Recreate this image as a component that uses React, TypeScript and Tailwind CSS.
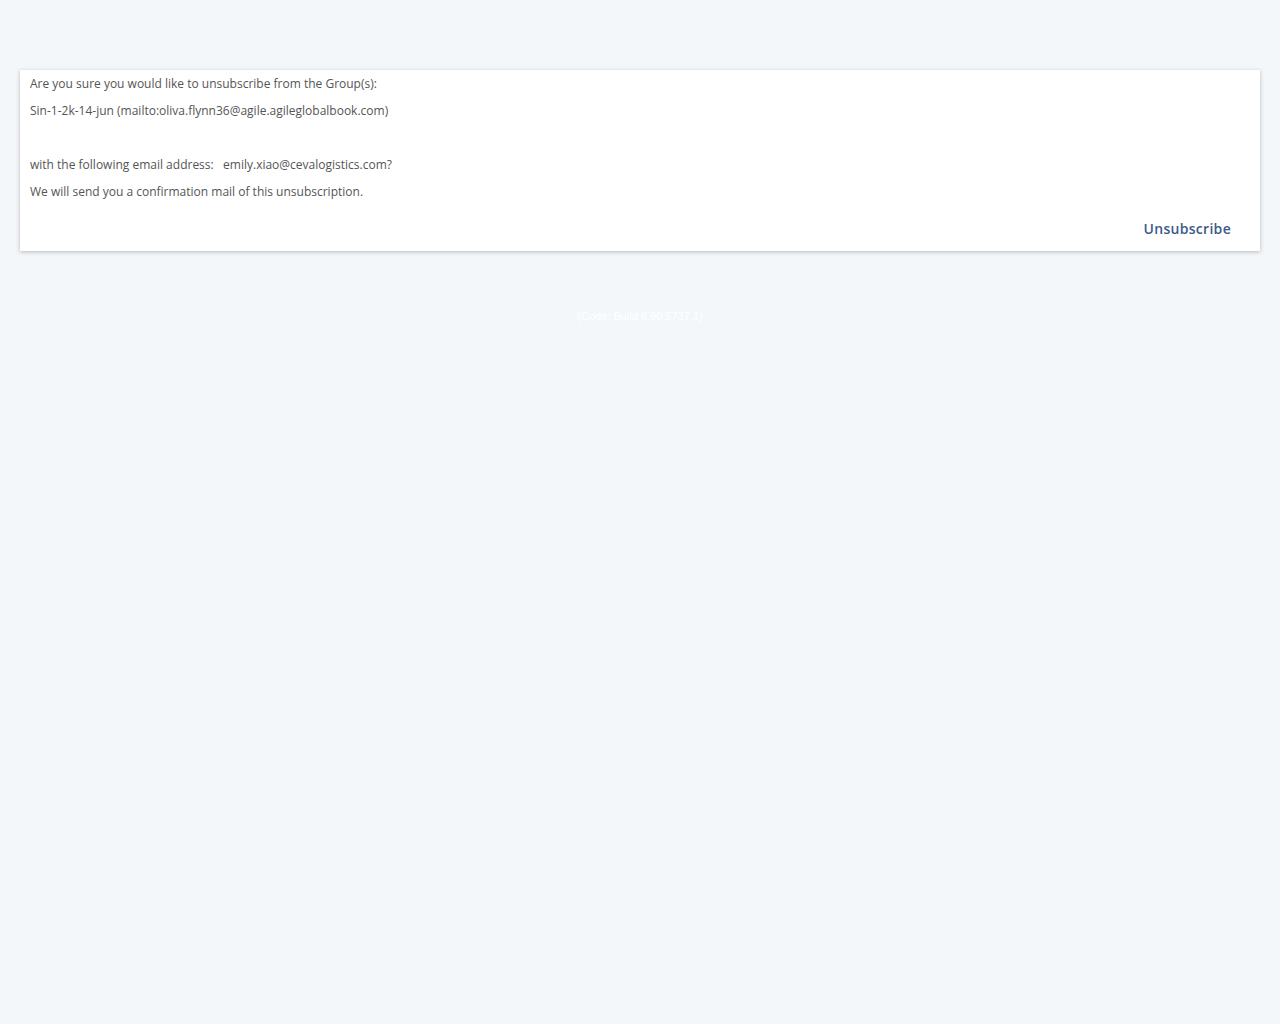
import React from "react";

const App = () => {
  const lines = [
    "Are you sure you would like to unsubscribe from the Group(s):",
    "Sin-1-2k-14-jun (mailto:oliva.flynn36@agile.agileglobalbook.com)",
    "",
    "with the following email address:\u00a0\u00a0\u00a0emily.xiao@cevalogistics.com?",
    "We will send you a confirmation mail of this unsubscription.",
  ];

  return (
    <div className="min-h-screen bg-[#f4f7fa] px-5 pt-[70px] font-['Open_Sans',sans-serif]">
      <div className="bg-white shadow-[0_1px_4px_rgba(0,0,0,0.25)] px-[10px] pt-[5px] pb-[10px]">
        {lines.map((line, i) => (
          <p key={i} className="text-[12px] leading-[18px] h-[18px] mb-[9px] text-[#555]">
            {line}
          </p>
        ))}
        <div className="flex justify-end pr-[19px] pt-[7px]">
          <button className="text-[14px] font-semibold text-[#3d5a8a] tracking-[0.3px] leading-[24px]">
            Unsubscribe
          </button>
        </div>
      </div>
      <div className="text-center text-white text-[11px] leading-[14px] font-['Liberation_Sans',sans-serif] mt-[58px]">
        (Code: Build 6.90.5737.1)
      </div>
    </div>
  );
};

export default App;
